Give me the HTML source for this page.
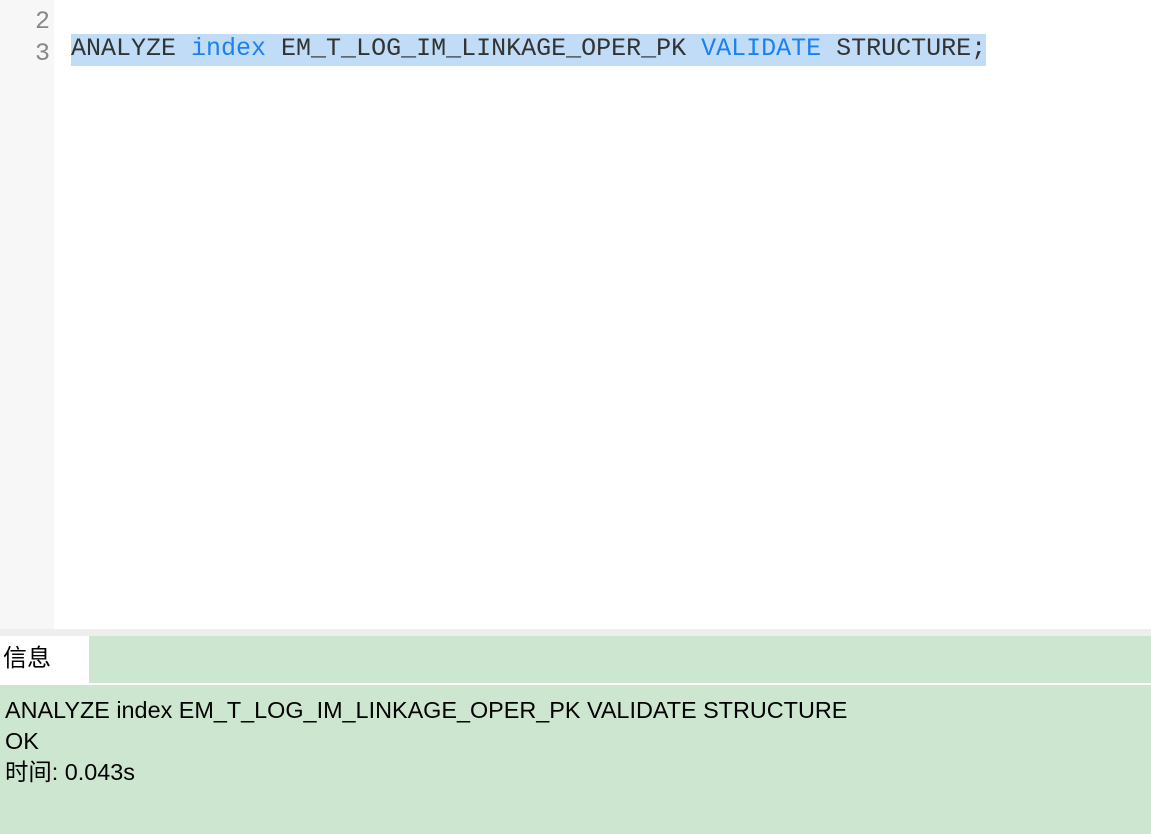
<!DOCTYPE html>
<html><head><meta charset="utf-8"><style>
body{margin:0;width:1151px;height:834px;overflow:hidden;background:#fff;position:relative;font-family:"Liberation Sans","Noto Sans CJK SC",sans-serif}
.gut{position:absolute;left:0;top:0;width:54px;height:629px;background:#f7f7f7}
.ln{position:absolute;right:1101px;font:25px "Liberation Mono","DejaVu Sans Mono",monospace;color:#888;text-align:right;width:50px}
.code{position:absolute;left:71px;top:34px;height:32px;line-height:38px;background:#c1dcf6;font:25px "Liberation Mono","DejaVu Sans Mono",monospace;color:#333;white-space:pre;overflow:hidden}
.k{color:#1a82f0}
.strip{position:absolute;left:0;top:629px;width:1151px;height:7px;background:#eee}
.bottom{position:absolute;left:0;top:636px;width:1151px;height:198px;background:#cde6d0}
.tab{position:absolute;left:0;top:636px;width:89px;height:47px;background:#fff;font-size:24px;line-height:46px;padding-left:3px;box-sizing:border-box;color:#000}
.sep{position:absolute;left:0;top:683px;width:1151px;height:2px;background:#fff}
.msg{position:absolute;left:5px;top:695px;font-size:23.4px;line-height:31px;color:#000}
</style></head><body>
<div class="gut"></div>
<div class="ln" style="top:7px">2</div>
<div class="ln" style="top:39px">3</div>
<div class="code">ANALYZE <span class="k">index</span> EM_T_LOG_IM_LINKAGE_OPER_PK <span class="k">VALIDATE</span> STRUCTURE;</div>
<div class="strip"></div>
<div class="bottom"></div>
<div class="tab">信息</div>
<div class="sep"></div>
<div class="msg">ANALYZE index EM_T_LOG_IM_LINKAGE_OPER_PK VALIDATE STRUCTURE<br>OK<br>时间: 0.043s</div>
</body></html>
